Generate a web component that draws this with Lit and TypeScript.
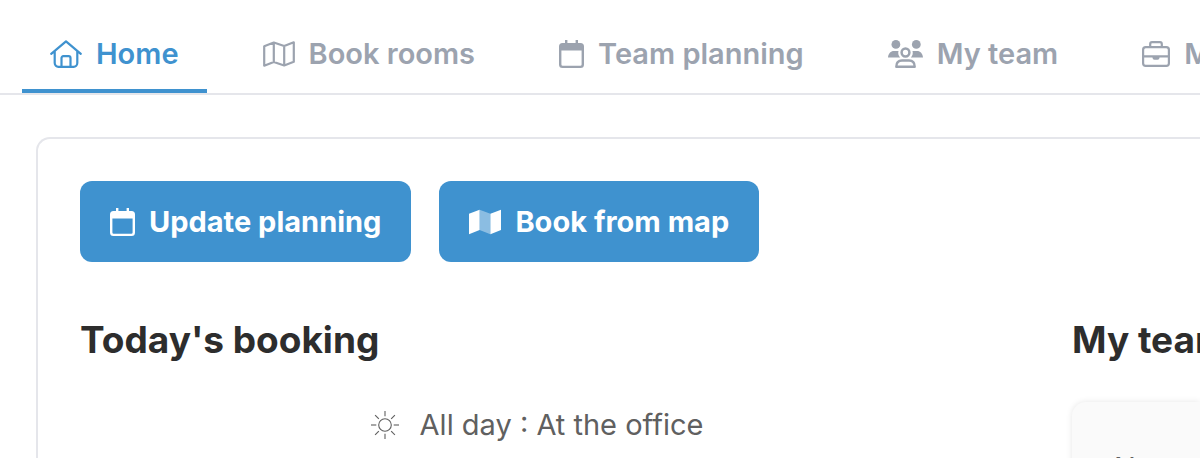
import { LitElement, html, css, svg } from "lit";
import { customElement, state } from "lit/decorators.js";

const calendar = html`<svg class="icon" width="25" height="28" viewBox="0 0 25 28" aria-hidden="true">
  <path fill="currentColor" fill-rule="evenodd" d="M6 0h2.4v3h8.200V0H19v3h2.500A3.500 3.500 0 0 1 25 6.500v18a3.500 3.500 0 0 1-3.500 3.500h-18A3.500 3.500 0 0 1 0 24.500v-18A3.500 3.500 0 0 1 3.500 3H6zM2.400 10.400v14a1.300 1.300 0 0 0 1.300 1.300h17.600a1.300 1.300 0 0 0 1.300-1.300v-14z"/>
</svg>`;

const home = html`<svg class="icon" width="32" height="28" viewBox="0 0 32 28" fill="none" stroke="currentColor" stroke-width="2.200" stroke-linecap="round" stroke-linejoin="round" aria-hidden="true">
  <path d="M1.200 13.800 16 1.300l14.800 12.500M4.700 11.500v11.600a3.700 3.700 0 0 0 3.700 3.700h15.200a3.700 3.700 0 0 0 3.700-3.700V11.500M11.500 26.500V18a1.800 1.800 0 0 1 1.800-1.800h5.400a1.800 1.800 0 0 1 1.800 1.800v8.500"/>
</svg>`;

const mapOutline = html`<svg class="icon" width="32" height="26" viewBox="0 0 32 26" fill="none" stroke="currentColor" stroke-width="2.200" stroke-linejoin="round" aria-hidden="true">
  <path d="M1.200 5.200 10.800 1.500 21.200 5 30.800 1.300V20.800L21.200 24.500 10.800 21 1.200 24.700zM10.800 1.500V21M21.200 5v19.500"/>
</svg>`;

const mapSolid = html`<svg class="icon" width="32" height="26" viewBox="0 0 32 26" fill="currentColor" aria-hidden="true">
  <path d="M0 4.800 10.600.8V21L0 25.200zM21.400 4.800 32 .8V21l-10.600 4.200z"/>
  <path opacity=".4" d="M10.600.8 21.400 4.800v20.400L10.600 21z"/>
</svg>`;

const people = html`<svg class="icon" width="35" height="28" viewBox="0 0 35 28" fill="currentColor" aria-hidden="true">
  <circle cx="7.900" cy="4.400" r="4.400"/><circle cx="28.300" cy="4.400" r="4.400"/>
  <path d="M0 17.500C.4 13.600 2.600 11 6 11h4.500a7 7 0 0 0 1.600 6.500zM35 17.500c-.4-3.900-2.600-6.500-6-6.500h-4.500a7 7 0 0 1-1.600 6.500z"/>
  <circle cx="17.500" cy="12.500" r="3.900" fill="none" stroke="currentColor" stroke-width="2.500"/>
  <path d="M8.300 26.800c0-4 2.200-6.300 5.700-6.300h7c3.500 0 5.700 2.300 5.700 6.300z" fill="none" stroke="currentColor" stroke-width="2.400" stroke-linejoin="round"/>
</svg>`;

const briefcase = html`<svg class="icon" width="28" height="26" viewBox="0 0 28 26" fill="none" stroke="currentColor" stroke-width="2.200" aria-hidden="true">
  <rect x="1.100" y="6.200" width="25.800" height="18.700" rx="2.600"/>
  <path d="M8.200 6V2.900a1.800 1.800 0 0 1 1.800-1.800h8a1.800 1.800 0 0 1 1.800 1.800V6M1 15.300h26"/>
  <path d="M10.500 15.500h7v1.300a2 2 0 0 1-2 2h-3a2 2 0 0 1-2-2z" fill="currentColor" stroke="none"/>
</svg>`;

const sun = html`<svg class="icon" width="28" height="28" viewBox="0 0 28 28" fill="none" stroke="currentColor" stroke-width="1.100" aria-hidden="true">
  <circle cx="14" cy="14" r="6.300"/>
  ${[0, 45, 90, 135, 180, 225, 270, 315].map((a) => svg`<path d="M14 0v5.300" transform="rotate(${a} 14 14)"/>`)}
</svg>`;

const tabs = [
  { id: "home", label: "Home", icon: home },
  { id: "rooms", label: "Book rooms", icon: mapOutline },
  { id: "planning", label: "Team planning", icon: calendar },
  { id: "team", label: "My team", icon: people },
  { id: "office", label: "My office", icon: briefcase },
];

@customElement("app-root")
export class AppRoot extends LitElement {
  @state() private current = "home";

  static styles = css`
    :host {
      display: block;
      height: 100vh;
      overflow: hidden;
      background: #fff;
      color: #2d2d2d;
      font: 400 29px/36px Inter, "Open Sans", sans-serif;
      white-space: nowrap;
    }
    * { box-sizing: border-box; }
    .icon { display: block; flex: none; }
    .tabs {
      display: flex;
      gap: 28px;
      padding: 16px 22px 0;
      border-bottom: 2px solid #e5e6eb;
      overflow: hidden;
    }
    .tab {
      display: flex;
      flex: none;
      align-items: center;
      gap: 14px;
      height: 77px;
      padding: 2px 28px 0;
      border-bottom: 4px solid transparent;
      color: #9ca3af;
      font-weight: 600;
      text-decoration: none;
    }
    .tab.active { color: #3f92cf; border-color: #3f92cf; }
    .panel {
      margin: 42px 0 0 36px;
      padding: 42px 0 42px 42px;
      border: 2px solid #e5e6eb;
      border-right: 0;
      border-radius: 14px 0 0 14px;
    }
    .actions { display: flex; gap: 28px; }
    .action {
      display: flex;
      align-items: center;
      gap: 14px;
      height: 81px;
      padding: 0 30px;
      border: 0;
      border-radius: 12px;
      background: #3f92cf;
      color: #fff;
      font: inherit;
      font-weight: 700;
      cursor: pointer;
    }
    .columns {
      display: grid;
      grid-template-columns: minmax(0, 50fr) minmax(0, 7fr);
      column-gap: 78px;
      margin-top: 56px;
    }
    h2 {
      margin: 0 0 40px;
      font-size: 37px;
      line-height: 44px;
      font-weight: 700;
    }
    .booking {
      display: flex;
      align-items: center;
      justify-content: center;
      gap: 21px;
      margin: 0;
      padding-top: 5px;
      color: #606060;
    }
    .team {
      padding: 48px 42px;
      border-radius: 14px 0 0 14px;
      background: #fafafa;
      box-shadow: 0 0 6px rgba(0, 0, 0, 0.1);
      color: #606060;
    }
    .team p { margin: 0; }
  `;

  render() {
    return html`
      <nav class="tabs">
        ${tabs.map((t) => html`<a class="tab ${t.id === this.current ? "active" : ""}" href="#${t.id}"
          @click=${() => (this.current = t.id)}>${t.icon}<span>${t.label}</span></a>`)}
      </nav>
      <main class="panel">
        <div class="actions">
          <button class="action" type="button">${calendar}<span>Update planning</span></button>
          <button class="action" type="button">${mapSolid}<span>Book from map</span></button>
        </div>
        <div class="columns">
          <section>
            <h2>Today's booking</h2>
            <p class="booking">${sun}<span>All day : At the office</span></p>
          </section>
          <section>
            <h2>My team</h2>
            <div class="team"><p>No one</p></div>
          </section>
        </div>
      </main>
    `;
  }
}
